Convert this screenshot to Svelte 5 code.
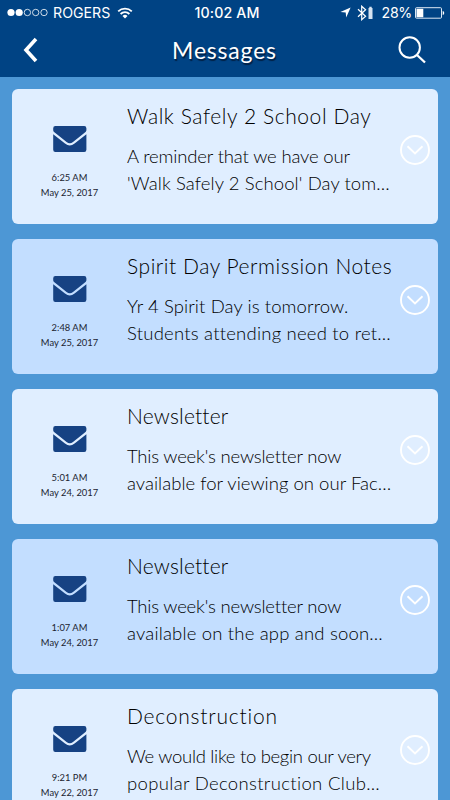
<script>
  // spacing: letter spacing of the title and of each preview line
  const messages = [
    {
      title: 'Walk Safely 2 School Day',
      lines: ['A reminder that we have our', "'Walk Safely 2 School' Day tom…"],
      time: '6:25 AM',
      date: 'May 25, 2017',
      spacing: [0.58, -0.16, 0.1]
    },
    {
      title: 'Spirit Day Permission Notes',
      lines: ['Yr 4 Spirit Day is tomorrow.', 'Students attending need to ret…'],
      time: '2:48 AM',
      date: 'May 25, 2017',
      spacing: [0.54, 0.1, 0.22]
    },
    {
      title: 'Newsletter',
      lines: ["This week's newsletter now", 'available for viewing on our Fac…'],
      time: '5:01 AM',
      date: 'May 24, 2017',
      spacing: [0.18, -0.2, 0.03]
    },
    {
      title: 'Newsletter',
      lines: ["This week's newsletter now", 'available on the app and soon…'],
      time: '1:07 AM',
      date: 'May 24, 2017',
      spacing: [0.18, -0.2, 0.18]
    },
    {
      title: 'Deconstruction',
      lines: ['We would like to begin our very', 'popular Deconstruction Club…'],
      time: '9:21 PM',
      date: 'May 22, 2017',
      spacing: [0.78, -0.3, 0.33]
    }
  ];
</script>

<div class="screen">
  <header>
    <div class="status-bar">
      <div class="carrier">
        <svg width="41" height="9" viewBox="0 0 41 9">
          <circle cx="4" cy="4.5" r="3.6" fill="#fff" />
          <circle cx="12.2" cy="4.5" r="3.6" fill="#fff" />
          <g fill="none" stroke="#fff" stroke-width=".8">
            <circle cx="20.4" cy="4.5" r="3.2" />
            <circle cx="28.7" cy="4.5" r="3.2" />
            <circle cx="37" cy="4.5" r="3.2" />
          </g>
        </svg>
        <span class="carrier-name">ROGERS</span>
        <svg width="16" height="12" viewBox="0 0 16 12" fill="none" stroke="#fff" stroke-width="1.8">
          <path d="M1.2 4.3a9.8 9.8 0 0 1 13.6 0M3.6 7a6.3 6.3 0 0 1 8.8 0" />
          <path d="M5.5 9a3.7 3.7 0 0 1 5 0L8 11.5z" fill="#fff" stroke="none" />
        </svg>
      </div>
      <span class="clock">10:02 AM</span>
      <div class="indicators">
        <svg class="location" width="11" height="11" viewBox="0 0 11 11">
          <path d="M10.6.4 6.2 10.5 5.7 5.5.4 5z" fill="#fff" />
        </svg>
        <svg class="bluetooth" width="17" height="16" viewBox="0 0 17 16">
          <path d="M1 4.2l7.6 7-3.9 3.5V1.2l3.9 3.5-7.6 7" fill="none" stroke="#fff" stroke-width="1.2" />
          <path d="M12.3 3V1.7h2.4V3h.8v11h-4V3z" fill="#d6e3f1" />
        </svg>
        <span class="percent">28%</span>
        <svg width="30" height="12" viewBox="0 0 30 12">
          <rect x=".5" y=".7" width="26" height="10.5" rx="1" fill="none" stroke="#dce8f4" />
          <path d="M1.5 1.7h6.8v8.5H1.5zM27.7 4c2 .5 2 3.5 0 4z" fill="#fff" />
        </svg>
      </div>
    </div>
    <div class="nav">
      <svg class="back" width="16" height="26" viewBox="0 0 16 26">
        <path d="M13 2 3 13l10 11" fill="none" stroke="#fff" stroke-width="3.6" />
      </svg>
      <h1>Messages</h1>
      <svg class="search" width="28" height="28" viewBox="0 0 28 28" fill="none" stroke="#fff" stroke-width="2">
        <circle cx="11.7" cy="11.5" r="10.2" />
        <path d="M19 19l8 7.5" stroke-width="2.3" />
      </svg>
    </div>
  </header>

  <main>
    {#each messages as message}
      <article>
        <div class="meta">
          <svg class="envelope" width="34" height="26" viewBox="0 0 34 26" fill="#164283">
            <path d="M2.4 0h28.8a2.200 2.200 0 0 1 2.200 2.200v1.800c0 1-.6 1.900-1.500 2.600L20 16c-2.200 1.700-4.200 1.700-6.400 0L1.700 6.600C.8 5.900.2 5 .2 4V2.200A2.200 2.200 0 0 1 2.400 0z" />
            <path d="M.2 8.200l11.800 9.400c3.300 2.600 6.300 2.600 9.600 0l11.800-9.400v15.600a2.200 2.200 0 0 1-2.200 2.200H2.400a2.200 2.200 0 0 1-2.200-2.200z" />
          </svg>
          <time>{message.time}<br />{message.date}</time>
        </div>
        <div class="content">
          <h2><span style="letter-spacing: {message.spacing[0]}px">{message.title}</span></h2>
          {#each message.lines as line, i}
            <p><span style="letter-spacing: {message.spacing[i + 1]}px">{line}</span></p>
          {/each}
        </div>
        <svg class="expand" width="30" height="30" viewBox="0 0 30 30" fill="none" stroke="#fff" stroke-width="1.9">
          <circle cx="15" cy="15" r="14" />
          <path d="M7.5 11.2l7.5 7.3 7.5-7.3" />
        </svg>
      </article>
    {/each}
  </main>
</div>

<style>
  :global(body) {
    margin: 0;
    background: #4d97d5;
  }
  .screen {
    width: 450px;
    height: 800px;
    overflow: hidden;
    background: #4d97d5;
    font-family: Papyrus, Lato, sans-serif;
  }
  svg {
    display: block;
    flex: none;
  }
  header {
    height: 77px;
    background: #004384;
    color: white;
  }
  .status-bar {
    height: 25px;
    display: grid;
    grid-template-columns: 1fr auto 1fr;
    align-items: center;
    padding: 0 5px 0 7px;
    font-family: Inter, sans-serif;
    font-size: 14.2px;
    line-height: 25px;
  }
  .carrier,
  .indicators {
    display: flex;
    align-items: center;
  }
  .carrier-name {
    margin: 0 7px 0 5px;
  }
  .clock {
    padding-left: 2px;
    font-weight: 500;
    letter-spacing: 0.15px;
  }
  .indicators {
    justify-content: flex-end;
  }
  .location {
    margin-right: 6px;
  }
  .percent {
    margin: 0 3px 0 8px;
    letter-spacing: -0.3px;
  }
  .nav {
    height: 50px;
    display: grid;
    grid-template-columns: 1fr auto 1fr;
    align-items: center;
    padding: 0 24px 0 23px;
  }
  .search {
    justify-self: end;
  }
  h1 {
    margin: 0;
    font-size: 23px;
    font-weight: 400;
    line-height: 50px;
    letter-spacing: 0.8px;
    text-shadow: 1px 2px 1px #001f42;
  }
  main {
    display: flex;
    flex-direction: column;
    gap: 15px;
    padding: 12px;
  }
  article {
    flex: none;
    height: 135px;
    box-sizing: border-box;
    display: flex;
    border-radius: 6px;
    background: #e0eeff;
    color: #000;
  }
  article:nth-child(even) {
    background: #c3deff;
  }
  .meta {
    width: 115px;
    padding-top: 37px;
    display: flex;
    flex-direction: column;
    align-items: center;
  }
  time {
    margin-top: 18px;
    color: #1c2430;
    font-size: 9.4px;
    line-height: 15px;
    text-align: center;
  }
  .content {
    flex: 1;
    padding-top: 13px;
    white-space: nowrap;
  }
  h2 {
    margin: 0 0 12.5px;
    font-size: 21px;
    font-weight: 300;
    line-height: 28px;
  }
  p {
    margin: 0;
    font-size: 18.5px;
    font-weight: 300;
    line-height: 27.5px;
  }
  .expand {
    margin: 46px 8px 0 0;
  }
</style>
